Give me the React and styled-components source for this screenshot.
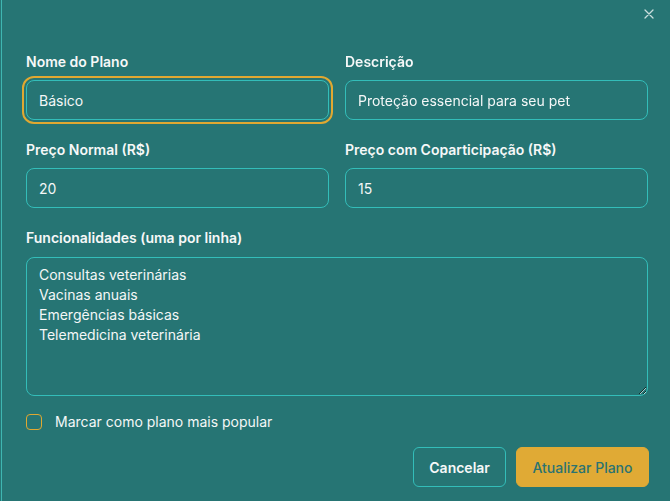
import React from "react"
import styled, { createGlobalStyle, css } from "styled-components"

const Global = createGlobalStyle`
  html, body {
    margin: 0;
    padding: 0;
    background: #267574;
    overflow: hidden;
  }
  * { box-sizing: border-box; }
`

const Dialog = styled.div`
  width: 671px;
  height: 501px;
  margin-left: 1px;
  border-left: 1px solid #3fb6b1;
  background: #267574;
  padding: 52px 24px 0 24px;
  position: relative;
  font-family: Inter, "Noto Sans", sans-serif;
  color: #f4f7f7;
`

const Close = styled.button`
  position: absolute;
  top: 6px;
  right: 15px;
  width: 16px;
  height: 16px;
  padding: 0;
  border: none;
  background: none;
  color: #c9dedd;
  display: flex;
  align-items: center;
  justify-content: center;
`

const Form = styled.div`
  display: flex;
  flex-direction: column;
  gap: 20px;
`

const Row = styled.div`
  display: grid;
  grid-template-columns: 1fr 1fr;
  gap: 16px;
`

const Field = styled.div`
  display: flex;
  flex-direction: column;
  gap: 8px;
`

const Label = styled.label`
  font-size: 14px;
  line-height: 20px;
  font-weight: 600;
  color: #f6f8f8;
`

const fieldBase = css`
  width: 100%;
  border: 1px solid #33bdb9;
  border-radius: 8px;
  background: #267574;
  color: #f4f7f7;
  font-family: Inter, "Noto Sans", sans-serif;
  font-size: 14px;
  line-height: 20px;
  padding: 0 12px;
  outline: none;
`

const Input = styled.input`
  ${fieldBase}
  height: 40px;
  ${(p) =>
    p.$focused &&
    css`
      outline: 2px solid #e0a831;
      outline-offset: 2px;
    `}
  &:focus {
    outline: 2px solid #e0a831;
    outline-offset: 2px;
  }
`

const TextArea = styled.textarea`
  ${fieldBase}
  height: 139px;
  margin-top: 1px;
  padding: 7px 12px;
  resize: vertical;
`

const CheckRow = styled.label`
  display: flex;
  align-items: center;
  gap: 13px;
  font-size: 14px;
  line-height: 20px;
  margin-top: -4px;
  color: #f4f7f7;
`

const Box = styled.span`
  width: 16px;
  height: 16px;
  border: 1px solid #e0a831;
  border-radius: 4px;
  flex-shrink: 0;
`

const Actions = styled.div`
  display: flex;
  justify-content: flex-end;
  gap: 10px;
  margin-top: -5px;
  margin-right: -1px;
`

const Button = styled.button`
  height: 40px;
  border-radius: 6px;
  font-family: Inter, "Noto Sans", sans-serif;
  font-size: 14px;
  ${(p) =>
    p.$primary
      ? css`
          padding: 0 15.5px;
          background: #e0aa35;
          border: 1px solid #e0aa35;
          color: #2a7372;
          font-weight: 500;
        `
      : css`
          padding: 0 15px;
          background: transparent;
          border: 1px solid #33bdb9;
          color: #f6f8f8;
          font-weight: 600;
        `}
`

const features = [
  "Consultas veterinárias",
  "Vacinas anuais",
  "Emergências básicas",
  "Telemedicina veterinária",
].join("\n")

export default function App() {
  return (
    <>
      <Global />
      <Dialog>
        <Close aria-label="Fechar">
          <svg width="10" height="10" viewBox="0 0 10 10" fill="none" stroke="currentColor" strokeWidth="1.3" strokeLinecap="round">
            <path d="M1 1L9 9M9 1L1 9" />
          </svg>
        </Close>
        <Form>
          <Row>
            <Field>
              <Label>Nome do Plano</Label>
              <Input $focused defaultValue="Básico" autoFocus />
            </Field>
            <Field>
              <Label>Descrição</Label>
              <Input defaultValue="Proteção essencial para seu pet" />
            </Field>
          </Row>
          <Row>
            <Field>
              <Label>Preço Normal (R$)</Label>
              <Input defaultValue="20" />
            </Field>
            <Field>
              <Label>Preço com Coparticipação (R$)</Label>
              <Input defaultValue="15" />
            </Field>
          </Row>
          <Field>
            <Label>Funcionalidades (uma por linha)</Label>
            <TextArea defaultValue={features} />
          </Field>
          <CheckRow>
            <Box />
            Marcar como plano mais popular
          </CheckRow>
          <Actions>
            <Button>Cancelar</Button>
            <Button $primary>Atualizar Plano</Button>
          </Actions>
        </Form>
      </Dialog>
    </>
  )
}
